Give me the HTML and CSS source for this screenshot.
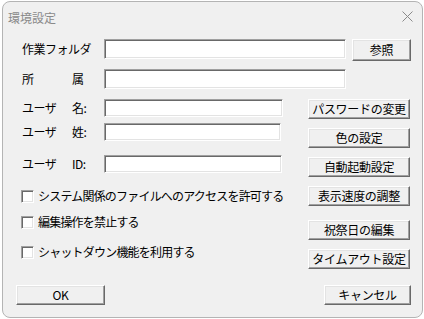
FILE: index.html
```html
<!DOCTYPE html>
<html lang="ja">
<head>
  <meta charset="UTF-8">
  <title>環境設定</title>
  <link rel="stylesheet" href="styles.css">
</head>
<body>
  <div class="window">
    <!-- Title Bar -->
    <div class="titlebar">
      <span class="title">環境設定</span>
      <svg class="close" width="11" height="11" viewBox="0 0 11 11">
        <path d="M0.5 0.5 L10.5 10.5 M10.5 0.5 L0.5 10.5" stroke="#8a8a8a" stroke-width="1" fill="none"/>
      </svg>
    </div>

    <div class="content">
      <!-- Folder -->
      <div class="row row-folder">
        <label class="label">作業フォルダ</label>
        <input type="text" class="field field-wide">
        <button class="btn btn-browse">参照</button>
      </div>

      <!-- Affiliation -->
      <div class="row row-dept">
        <label class="label"><span class="spread">所</span>属</label>
        <input type="text" class="field field-wide">
      </div>

      <div class="main">
        <!-- Left column -->
        <div class="left">
          <div class="user-row">
            <label class="label"><span class="spread-user">ユーザ</span>名:</label>
            <input type="text" class="field field-user">
          </div>
          <div class="user-row user-last">
            <label class="label"><span class="spread-user">ユーザ</span>姓:</label>
            <input type="text" class="field field-user field-short">
          </div>
          <div class="user-row user-id">
            <label class="label"><span class="spread-user">ユーザ</span>ID:</label>
            <input type="text" class="field field-user field-mid">
          </div>

          <label class="check check-access"><span class="box"></span>システム関係のファイルへのアクセスを許可する</label>
          <label class="check check-edit"><span class="box"></span>編集操作を禁止する</label>
          <label class="check check-shutdown"><span class="box"></span>シャットダウン機能を利用する</label>
        </div>

        <!-- Right column -->
        <div class="right">
          <button class="btn side-btn">パスワードの変更</button>
          <button class="btn side-btn">色の設定</button>
          <button class="btn side-btn">自動起動設定</button>
          <button class="btn side-btn">表示速度の調整</button>
          <button class="btn side-btn gap-big">祝祭日の編集</button>
          <button class="btn side-btn">タイムアウト設定</button>
        </div>
      </div>
    </div>

    <!-- Footer -->
    <div class="footer">
      <button class="btn btn-ok">OK</button>
      <button class="btn btn-cancel">キャンセル</button>
    </div>
  </div>
</body>
</html>
```

FILE: styles.css
```css
/* Base */
* {
  margin: 0;
  padding: 0;
  box-sizing: border-box;
}

body {
  background: #ffffff;
  font-family: "Noto Sans CJK JP", "Noto Sans", sans-serif;
  font-size: 12px;
  color: #000;
  letter-spacing: -0.5px;
}

/* Window */
.window {
  width: 421px;
  height: 317px;
  margin: 1px 0 0 2px;
  background: #f0f0f0;
  border: 1px solid #b4b4b4;
  border-radius: 8px;
  overflow: hidden;
}

.titlebar {
  height: 30px;
  display: flex;
  align-items: center;
  justify-content: space-between;
  padding: 0 9px 0 5px;
}

.titlebar .title {
  color: #8a8a8a;
  font-size: 12px;
  letter-spacing: 0;
}

.titlebar .close {
  margin-top: -2px;
}

/* Content */
.content {
  padding: 7px 11px 0 19px;
}

.row {
  display: flex;
  align-items: flex-start;
}

.row-dept {
  margin-top: 8px;
}

.label {
  width: 82px;
  flex: none;
  line-height: 20px;
  display: flex;
}

.spread {
  width: 50px;
}

.spread-user {
  width: 50px;
}

/* Sunken text field */
.field {
  height: 20px;
  background: #fff;
  border-top: 1px solid #a0a0a0;
  border-left: 1px solid #a0a0a0;
  border-right: 1px solid #ffffff;
  border-bottom: 1px solid #ffffff;
  box-shadow: inset 1px 1px 0 #696969, inset -1px -1px 0 #e3e3e3;
  outline: none;
}

.field-wide {
  width: 242px;
}

.field-user {
  width: 179px;
  height: 18px;
}

.field-short {
  width: 177px;
}

.field-mid {
  width: 178px;
}

/* Raised button */
.btn {
  font-family: inherit;
  font-size: 12px;
  letter-spacing: -0.3px;
  color: #000;
  background: #f0f0f0;
  border-top: 1px solid #ffffff;
  border-left: 1px solid #ffffff;
  border-right: 1px solid #696969;
  border-bottom: 1px solid #696969;
  box-shadow: inset -1px -1px 0 #a0a0a0, inset 1px 1px 0 #e3e3e3;
  line-height: 18px;
  cursor: pointer;
}

.btn-browse {
  width: 59px;
  height: 22px;
  margin-left: 6px;
}

/* Main area */
.main {
  display: flex;
  margin-top: 10px;
}

.left {
  width: 286px;
  display: flex;
  flex-direction: column;
}

.user-row {
  display: flex;
  align-items: center;
  height: 18px;
}

.user-row .label {
  line-height: 18px;
}

.user-last {
  margin-top: 6px;
}

.user-id {
  margin-top: 14px;
}

/* Checkboxes */
.check {
  display: flex;
  align-items: center;
  height: 16px;
  line-height: 16px;
  margin-left: -1px;
  white-space: nowrap;
  letter-spacing: -0.8px;
}

.check .box {
  width: 13px;
  height: 13px;
  margin-right: 4px;
  background: #fff;
  border-top: 1px solid #a0a0a0;
  border-left: 1px solid #a0a0a0;
  border-right: 1px solid #ffffff;
  border-bottom: 1px solid #ffffff;
  box-shadow: inset 1px 1px 0 #696969, inset -1px -1px 0 #e3e3e3;
}

.check-access {
  margin-top: 15px;
}

.check-edit {
  margin-top: 10px;
}

.check-shutdown {
  margin-top: 14px;
}

.right {
  display: flex;
  flex-direction: column;
}

.side-btn {
  width: 102px;
  height: 20px;
  margin-bottom: 9px;
}

.side-btn.gap-big {
  margin-top: 5px;
}

/* Footer */
.footer {
  display: flex;
  justify-content: space-between;
  padding: 7px 11px 0 13px;
}

.btn-ok {
  width: 89px;
  height: 20px;
}

.btn-cancel {
  width: 87px;
  height: 20px;
}
```
